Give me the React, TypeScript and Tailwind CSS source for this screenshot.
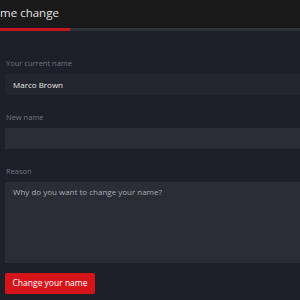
import React from "react";

export default function App() {
  const font = { fontFamily: '"Open Sans", "Noto Sans", sans-serif' };
  return (
    <div className="w-[300px] h-[300px] overflow-hidden bg-[#1e2029]" style={font}>
      <div className="h-[28px] bg-[#1a1a1a] flex items-start">
        <div className="ml-[-15px] mt-[3px] text-[11.5px] leading-[20px] text-[#e4e4e4] whitespace-nowrap">
          Name change
        </div>
      </div>
      <div className="h-[3px] bg-[#303136] flex">
        <div className="w-[70px] h-full bg-[#c8161d]" />
      </div>
      <div className="pl-[5px] pt-[27px] flex flex-col">
        <label className="text-[7.5px] leading-[10px] text-[#70747e] pl-px">Your current name</label>
        <div className="mt-[6px] h-[21px] bg-[#23262e] flex items-center pl-[8px] text-[8px] text-[#e8e8e8]">
          Marco Brown
        </div>
        <label className="mt-[17px] text-[7.5px] leading-[10px] text-[#70747e] pl-px">New name</label>
        <div className="mt-[6px] h-[21px] bg-[#2a2d36]" />
        <label className="mt-[17px] text-[7.5px] leading-[10px] text-[#70747e] pl-px">Reason</label>
        <div className="mt-[6px] h-[81px] bg-[#2a2d36] pl-[8px] pt-[4px] text-[8px] leading-[12px] text-[#a9abb0]">
          Why do you want to change your name?
        </div>
        <div className="mt-[10px]">
          <button className="h-[21px] w-[90px] rounded-[2px] bg-[#d7141a] text-white text-[8.5px] flex items-center justify-center">
            Change your name
          </button>
        </div>
      </div>
    </div>
  );
}
